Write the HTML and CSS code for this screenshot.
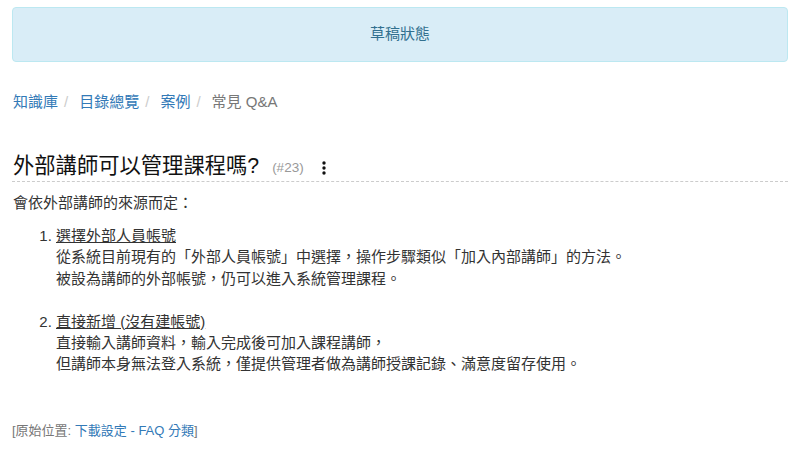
FILE: index.html
```html
<!DOCTYPE html>
<html lang="zh-Hant">
<head>
<meta charset="utf-8">
<title>外部講師可以管理課程嗎?</title>
<link rel="stylesheet" href="styles.css">
</head>
<body>
<div class="page">
  <div class="alert">草稿狀態</div>
  <ol class="breadcrumb">
    <li><a href="#">知識庫</a></li>
    <li><a href="#">目錄總覽</a></li>
    <li><a href="#">案例</a></li>
    <li class="active">常見 Q&amp;A</li>
  </ol>
  <h3 class="title">外部講師可以管理課程嗎? <small class="num">(#23)</small>
    <span class="kebab"><svg width="4" height="14" viewBox="0 0 4 14"><circle cx="2" cy="2" r="1.7" fill="#111"/><circle cx="2" cy="7" r="1.7" fill="#111"/><circle cx="2" cy="12" r="1.7" fill="#111"/></svg></span>
  </h3>
  <div class="content">
    <p>會依外部講師的來源而定：</p>
    <ol class="steps">
      <li><u>選擇外部人員帳號</u><br>從系統目前現有的「外部人員帳號」中選擇，操作步驟類似「加入內部講師」的方法。<br>被設為講師的外部帳號，仍可以進入系統管理課程。<br><br></li>
      <li><u>直接新增 (沒有建帳號)</u><br>直接輸入講師資料，輸入完成後可加入課程講師，<br>但講師本身無法登入系統，僅提供管理者做為講師授課記錄、滿意度留存使用。</li>
    </ol>
  </div>
  <p class="origin">[原始位置: <a href="#">下載設定 - FAQ 分類</a>]</p>
</div>
</body>
</html>
```

FILE: styles.css
```css
html, body {
  margin: 0;
  padding: 0;
  background: #fff;
}
body {
  font-family: "Liberation Sans", "Noto Sans CJK TC", sans-serif;
  font-size: 15px;
  line-height: 1.42857;
  color: #333;
}
.page {
  padding: 7px 12px 0 12px;
}
a {
  color: #337ab7;
  text-decoration: none;
}
.alert {
  background: #d9edf7;
  border: 1px solid #bce8f1;
  border-radius: 4px;
  color: #31708f;
  text-align: center;
  padding: 15px 15px 17px 15px;
  height: 21px;
  line-height: 21px;
}
.breadcrumb {
  list-style: none;
  margin: 29px 0 0 0;
  padding: 0 0 0 1px;
  display: flex;
}
.breadcrumb li + li::before {
  content: "/";
  padding: 0 11px 0 6px;
  color: #ccc;
}
.breadcrumb .active {
  color: #777;
}
.title {
  margin: 40px 0 0 0;
  padding: 0 0 1px 1px;
  font-size: 21.3px;
  font-weight: normal;
  line-height: 24px;
  color: #111;
  border-bottom: 1px dashed #ccc;
  display: flex;
  align-items: center;
}
.num {
  font-size: 13.5px;
  color: #999;
  margin-left: 13px;
  margin-top: 4px;
}
.kebab {
  display: inline-flex;
  margin-left: 18px;
  margin-top: 4px;
}
.content {
  padding-left: 1px;
}
.content p {
  margin: 10px 0 0 0;
}
.steps {
  margin: 11px 0 0 0;
  padding-left: 43px;
}
.origin {
  margin: 47px 0 0 0;
  font-size: 13px;
  color: #777;
}
```
